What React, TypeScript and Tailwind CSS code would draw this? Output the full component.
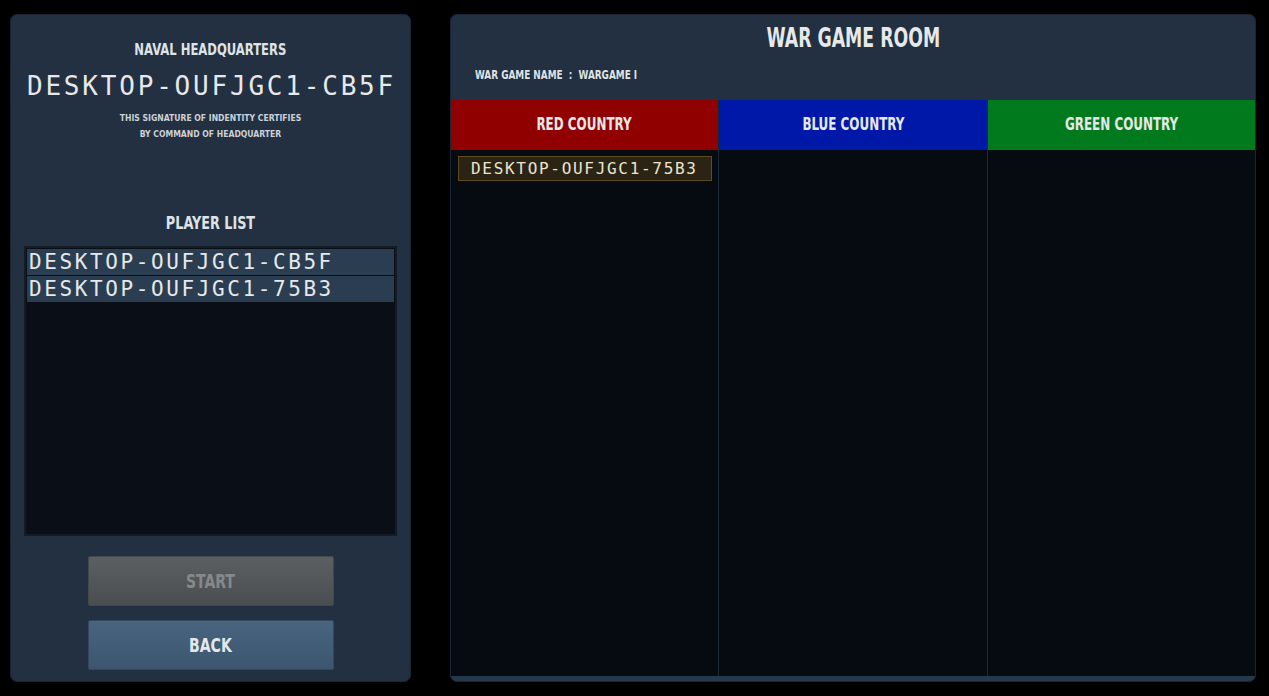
import React from "react";

const cond = { fontFamily: '"DejaVu Sans Condensed", "Roboto", sans-serif' };
const mono = { fontFamily: '"DejaVu Sans Mono", "Liberation Mono", monospace' };

export default function App() {
  return (
    <div className="w-[1269px] h-[696px] bg-black flex items-start pt-[14px] pl-[10px] gap-[39px] overflow-hidden">
      {/* Left panel */}
      <div className="w-[401px] h-[668px] bg-[#223041] rounded-[7px] border border-[#1a2533] flex flex-col items-center">
        <div style={cond} className="mt-[26px] text-[15px] leading-[18px] font-bold text-[#dfe3e6]">
          <span className="inline-block scale-x-[0.86]">NAVAL HEADQUARTERS</span>
        </div>
        <div style={mono} className="mt-[12px] text-[26px] leading-[30px] text-[#e6e8ea] tracking-[2.8px] pl-[2px]">DESKTOP-OUFJGC1-CB5F</div>
        <div style={cond} className="mt-[9px] text-[9px] leading-[16px] font-bold text-[#cdd2d6] text-center">
          <div><span className="inline-block scale-x-[0.95]">THIS SIGNATURE OF INDENTITY CERTIFIES</span></div>
          <div><span className="inline-block scale-x-[0.95]">BY COMMAND OF HEADQUARTER</span></div>
        </div>
        <div style={cond} className="mt-[71px] text-[18px] leading-[20px] font-bold text-[#dfe3e6]">
          <span className="inline-block scale-x-[0.79]">PLAYER LIST</span>
        </div>
        <div className="mt-[13px] w-[373px] h-[290px] bg-[#0a0f17] border-2 border-[#121b26] flex flex-col gap-[1px] p-[1px]">
          {["DESKTOP-OUFJGC1-CB5F", "DESKTOP-OUFJGC1-75B3"].map((n) => (
            <div key={n} className="h-[26px] bg-[#2b3d51] flex items-center pl-[2px]">
              <span style={mono} className="text-[21px] leading-[26px] text-[#e6e8ea] tracking-[2.6px]">{n}</span>
            </div>
          ))}
        </div>
        <button style={cond} className="mt-[20px] w-[246px] h-[50px] bg-gradient-to-b from-[#5c5f62] to-[#4b4e51] border border-[#45484b] rounded-[2px] text-[20px] font-bold text-[#85898c]">
          <span className="inline-block scale-x-[0.78]">START</span>
        </button>
        <button style={cond} className="mt-[14px] w-[246px] h-[50px] bg-gradient-to-b from-[#48647f] to-[#3c566f] border border-[#34495e] rounded-[2px] text-[20px] font-bold text-[#e4e8eb]">
          <span className="inline-block scale-x-[0.78]">BACK</span>
        </button>
      </div>

      {/* Right panel */}
      <div className="w-[806px] h-[668px] bg-[#223041] rounded-[7px] border border-[#1a2533] flex flex-col overflow-hidden">
        <div className="h-[85px] flex flex-col">
          <div style={cond} className="text-center mt-[8px] text-[26px] leading-[30px] font-bold text-[#e6e8ea]">
            <span className="inline-block scale-x-[0.74]">WAR GAME ROOM</span>
          </div>
          <div style={cond} className="mt-[14px] ml-[24px] text-[13px] leading-[16px] font-bold text-[#dfe3e6]">
            <span className="inline-block origin-left scale-x-[0.76] whitespace-pre">WAR GAME NAME  :  WARGAME I</span>
          </div>
        </div>
        <div className="flex h-[50px]">
          <div style={cond} className="w-[267px] bg-[#900000] flex items-center justify-center text-[17px] leading-[20px] pb-[2px] font-bold text-[#e6e8ea]">
            <span className="inline-block scale-x-[0.78]">RED COUNTRY</span>
          </div>
          <div className="w-[1px] bg-[#1a2533]" />
          <div style={cond} className="w-[268px] bg-[#0018a8] flex items-center justify-center text-[17px] leading-[20px] pb-[2px] font-bold text-[#e6e8ea]">
            <span className="inline-block scale-x-[0.78]">BLUE COUNTRY</span>
          </div>
          <div className="w-[1px] bg-[#1a2533]" />
          <div style={cond} className="flex-1 bg-[#007a1c] flex items-center justify-center text-[17px] leading-[20px] pb-[2px] font-bold text-[#e6e8ea]">
            <span className="inline-block scale-x-[0.78]">GREEN COUNTRY</span>
          </div>
        </div>
        <div className="flex flex-1 bg-[#060a11]">
          <div className="w-[267px] pt-[6px] pl-[7px]">
            <div className="w-[254px] h-[25px] bg-[#2b2415] border border-[#5d4c22] flex items-center pl-[12px]">
              <span style={mono} className="text-[16px] leading-[20px] text-[#ece4cc] tracking-[1.7px]">DESKTOP-OUFJGC1-75B3</span>
            </div>
          </div>
          <div className="w-[1px] bg-[#1c2836]" />
          <div className="w-[268px]" />
          <div className="w-[1px] bg-[#1c2836]" />
          <div className="flex-1" />
        </div>
        <div className="h-[5px] bg-[#26384b]" />
      </div>
    </div>
  );
}
